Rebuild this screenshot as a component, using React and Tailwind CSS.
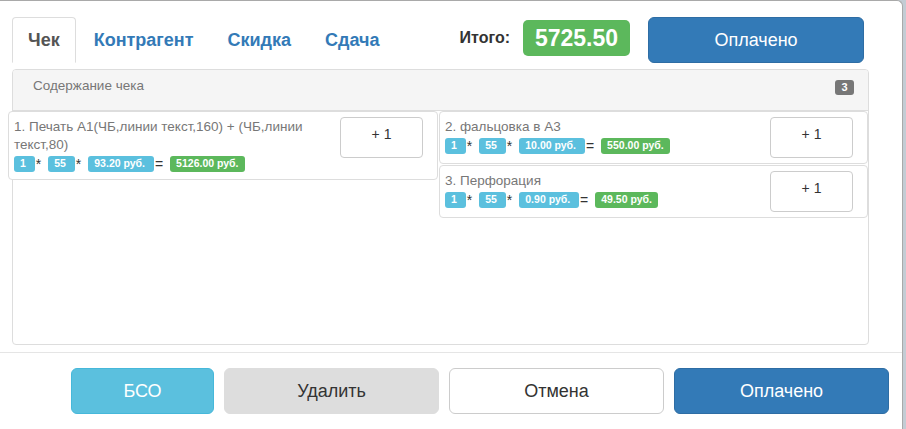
import React from 'react';

const items = [
  { title: '1. Печать А1(ЧБ,линии текст,160) + (ЧБ,линии текст,80)', qty: '1', count: '55', price: '93.20 руб.', total: '5126.00 руб.' },
  { title: '2. фальцовка в А3', qty: '1', count: '55', price: '10.00 руб.', total: '550.00 руб.' },
  { title: '3. Перфорация', qty: '1', count: '55', price: '0.90 руб.', total: '49.50 руб.' },
];

function Label({ children, green }) {
  return (
    <span className={`inline-block whitespace-pre text-white text-[10.5px] font-bold leading-[11px] pt-[2px] pb-[3px] px-[6px] rounded-[3px] ${green ? 'bg-[#5cb85c]' : 'bg-[#5bc0de]'}`}>
      {children}
    </span>
  );
}

function Sep({ children }) {
  return <span className="text-[14px] leading-[20px] text-[#333] ml-[1px] mr-[7px]">{children}</span>;
}

function Item({ item }) {
  return (
    <div className="flex items-start bg-white border border-[#ddd] rounded-[4px]">
      <div className="flex-1 pl-[5px] pt-[6px] pb-[5px]">
        <div className="text-[13.5px] leading-[18px] text-[#777]">{item.title}</div>
        <div className="flex items-center h-[20px]">
          <Label>{item.qty + ' '}</Label>
          <Sep>*</Sep>
          <Label>{item.count + ' '}</Label>
          <Sep>*</Sep>
          <Label>{item.price + ' '}</Label>
          <Sep>=</Sep>
          <Label green>{item.total}</Label>
        </div>
      </div>
      <button className="shrink-0 ml-[6px] mr-[14px] mt-[5px] mb-[5px] w-[83px] h-[41px] flex justify-center items-start pt-[6px] bg-white border border-[#ccc] rounded-[4px] text-[14px] leading-[20px] text-[#333]">
        + 1
      </button>
    </div>
  );
}

export default function App() {
  const tabs = ['Чек', 'Контрагент', 'Скидка', 'Сдача'];

  return (
    <div className="w-[906px] h-[429px] overflow-hidden bg-[#c3ccd4] font-['Liberation_Sans',Arial,sans-serif]">
      <div className="w-[903px] h-[430px] bg-white border-t border-r border-[#a9a9a9] rounded-tr-[6px] flex flex-col">
        <div className="pl-[12px] pt-[16px]">
          <div className="flex items-start w-[856px] h-[46px]">
            <div className="flex gap-[2px]">
              {tabs.map((t, i) => (
                <div
                  key={t}
                  className={`h-[46px] px-[15px] flex items-center border rounded-t-[4px] text-[18px] font-bold ${i === 0 ? 'border-[#ddd] border-b-transparent text-[#555]' : 'border-transparent text-[#337ab7]'}`}
                >
                  {t}
                </div>
              ))}
            </div>
            <div className="ml-auto mr-[4px] flex items-start">
              <span className="mt-[11px] text-[16px] leading-[20px] font-bold text-[#333]">Итого:</span>
              <span className="ml-[13px] mt-[3px] w-[107px] h-[36px] flex items-center justify-center bg-[#5cb85c] rounded-[5px] text-white text-[23px] font-bold">
                5725.50
              </span>
              <button className="ml-[18px] w-[216px] h-[46px] bg-[#337ab7] border border-[#2e6da4] rounded-[6px] text-white text-[18px]">
                Оплачено
              </button>
            </div>
          </div>

          <div className="mt-[6px] w-[857px] border border-[#ddd] rounded-[4px]">
            <div className="h-[41px] flex items-start justify-between pl-[20px] pr-[14px] bg-[#f5f5f5] border-b border-[#ddd] rounded-t-[3px]">
              <span className="pt-[7px] text-[13.5px] leading-[18px] text-[#777]">Содержание чека</span>
              <span className="mt-[10px] w-[19px] h-[15px] flex items-center justify-center bg-[#777] rounded-[3px] text-white text-[11px] font-bold">
                3
              </span>
            </div>
            <div className="h-[233px]">
              <div className="-ml-[5px] grid grid-cols-[430px_429px] gap-x-[1px] items-start">
                <Item item={items[0]} />
                <div className="flex flex-col gap-[1px]">
                  <Item item={items[1]} />
                  <Item item={items[2]} />
                </div>
              </div>
            </div>
          </div>
        </div>

        <div className="mt-[7px] border-t border-[#e5e5e5] pt-[15px] pr-[13px] flex justify-end gap-[10px]">
          <button className="w-[143px] h-[46px] bg-[#5bc0de] border border-[#46b8da] rounded-[6px] text-white text-[18px]">БСО</button>
          <button className="w-[215px] h-[46px] bg-[#dddddd] border border-[#dddddd] rounded-[6px] text-[#333] text-[18px]">Удалить</button>
          <button className="w-[215px] h-[46px] bg-white border border-[#ccc] rounded-[6px] text-[#333] text-[18px]">Отмена</button>
          <button className="w-[215px] h-[46px] bg-[#337ab7] border border-[#2e6da4] rounded-[6px] text-white text-[18px]">Оплачено</button>
        </div>
      </div>
    </div>
  );
}
